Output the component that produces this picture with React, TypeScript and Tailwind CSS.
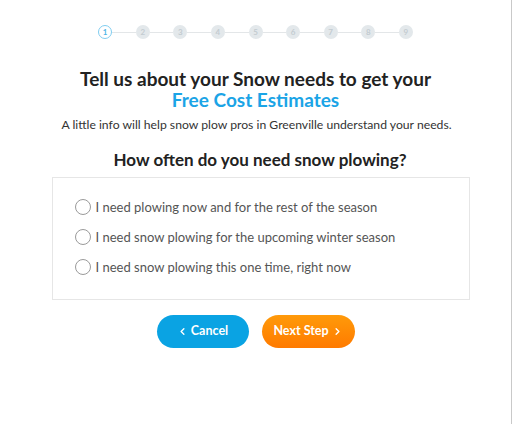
import { ChevronLeft, ChevronRight } from "lucide-react";

const steps = [1, 2, 3, 4, 5, 6, 7, 8, 9];

const options = [
  "I need plowing now and for the rest of the season",
  "I need snow plowing for the upcoming winter season",
  "I need snow plowing this one time, right now",
];

function Stepper() {
  return (
    <div className="flex items-center">
      {steps.map((n, i) => (
        <div key={n} className="flex items-center">
          {i > 0 && <span className="block h-px w-[23.6px] bg-[#e3e6e8]" />}
          <span
            className={
              n === 1
                ? "flex h-[14px] w-[14px] items-center justify-center rounded-full border border-[#7fcdf0] bg-white text-[8px] font-bold text-[#4db5e6]"
                : "flex h-[14px] w-[14px] items-center justify-center rounded-full bg-[#e3e8eb] text-[8px] font-bold text-[#c3ccd1]"
            }
          >
            {n}
          </span>
        </div>
      ))}
    </div>
  );
}

export default function App() {
  return (
    <div
      className="relative flex h-[424px] w-[512px] flex-col items-center border-r border-[#c9c9c9] bg-white"
      style={{ fontFamily: "Lato, 'Liberation Sans', sans-serif" }}
    >
      <div className="mt-[25px]">
        <Stepper />
      </div>

      <h1 className="mt-[29px] text-center text-[19px] font-bold leading-[21px] text-[#222]">
        Tell us about your Snow needs to get your
        <br />
        <span className="text-[#1ba4e6]">Free Cost Estimates</span>
      </h1>

      <p className="mt-[6px] ml-[2px] text-[12.2px] leading-[18px] text-[#333]">
        A little info will help snow plow pros in Greenville understand your needs.
      </p>

      <h2 className="mt-[16px] ml-[9px] text-[17px] font-bold leading-[20px] text-[#222]">
        How often do you need snow plowing?
      </h2>

      <div className="mt-[7px] ml-[10px] flex h-[123px] w-[418px] flex-col justify-center gap-[12px] border border-[#e6e6e6] pb-[4px] pl-[22px]">
        {options.map((o) => (
          <label key={o} className="flex items-center gap-[5px]">
            <span className="h-[16px] w-[16px] rounded-full border border-[#9a9a9a] bg-white" />
            <span className="text-[13px] leading-[18px] text-[#555]">{o}</span>
          </label>
        ))}
      </div>

      <div className="mt-[15px] flex gap-[13px]">
        <button className="flex h-[33px] w-[92px] items-center justify-center gap-[3px] rounded-full bg-[#0aa3e3] text-[12.5px] font-bold text-white">
          <ChevronLeft size={11} strokeWidth={3} />
          Cancel
        </button>
        <button className="flex h-[33px] w-[93px] items-center justify-center gap-[3px] rounded-full bg-gradient-to-b from-[#ff9a0a] to-[#ff7a00] text-[12.5px] font-bold text-white">
          Next Step
          <ChevronRight size={11} strokeWidth={3} />
        </button>
      </div>
    </div>
  );
}
